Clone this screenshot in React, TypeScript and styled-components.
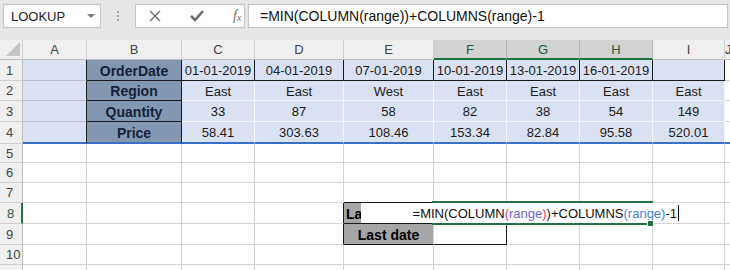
import { FC, ReactNode } from "react";
import styled, { createGlobalStyle } from "styled-components";

const GlobalStyle = createGlobalStyle`
  html, body {
    margin: 0;
    padding: 0;
    background: #ffffff;
    overflow: hidden;
  }
  body {
    font-family: "Liberation Sans", Arial, sans-serif;
  }
`;

const GREEN = "#217346";
const GRID = "#D4D4D4";
const DARK = "#1a1a1a";
const BLUE_FILL = "#D9E1F2";
const LABEL_FILL = "#8497B0";
const SOFT = "#F3F5FA";

const formula = "=MIN(COLUMN(range))+COLUMNS(range)-1";
const columns = ["A", "B", "C", "D", "E", "F", "G", "H", "I", "J"];
const selectedCols = ["F", "G", "H"];

type Row = { label: string; values: string[] };

const table: Row[] = [
  {
    label: "OrderDate",
    values: ["01-01-2019", "04-01-2019", "07-01-2019", "10-01-2019", "13-01-2019", "16-01-2019", ""]
  },
  { label: "Region", values: ["East", "East", "West", "East", "East", "East", "East"] },
  { label: "Quantity", values: ["33", "87", "58", "82", "38", "54", "149"] },
  { label: "Price", values: ["58.41", "303.63", "108.46", "153.34", "82.84", "95.58", "520.01"] }
];

const App: FC = () => (
  <>
    <GlobalStyle />
    <Page>
      <Toolbar>
        <NameBox>
          LOOKUP
          <DropArrow />
        </NameBox>
        <Grip>
          <i />
          <i />
          <i />
        </Grip>
        <ButtonBox>
          <ToolIcon>
            <svg width="12" height="12" viewBox="0 0 12 12">
              <path d="M1 1 L11 11 M11 1 L1 11" stroke="#6d6d6d" strokeWidth="1.4" />
            </svg>
          </ToolIcon>
          <ToolIcon>
            <svg width="14" height="12" viewBox="0 0 14 12">
              <path d="M1 6 L5 10 L13 1" stroke="#6d6d6d" strokeWidth="2.6" fill="none" />
            </svg>
          </ToolIcon>
          <Fx>
            f<sub>x</sub>
          </Fx>
        </ButtonBox>
        <FormulaInput>{formula}</FormulaInput>
      </Toolbar>

      <Sheet>
        <Corner>
          <svg width="14" height="14" viewBox="0 0 14 14">
            <path d="M14 0 L14 14 L0 14 Z" fill="#C4C4C4" />
          </svg>
        </Corner>
        {columns.map(c => (
          <ColHead key={c} $selected={selectedCols.includes(c)}>
            {c}
          </ColHead>
        ))}

        {table.map((row, i) => (
          <DataRow key={row.label} index={i} row={row} />
        ))}

        {[5, 6, 7, 8, 9, 10, 11].map(n => (
          <EmptyRow key={n} n={n} />
        ))}
      </Sheet>
    </Page>
  </>
);

export default App;

const DataRow: FC<{ index: number; row: Row }> = ({ index, row }) => {
  const last = index === 3;
  const first = index === 0;
  return (
    <>
      <RowHead>{index + 1}</RowHead>
      <Cell $bg={BLUE_FILL} $right={DARK} $bottom={last ? undefined : "#B9C3D6"} $blue={last} />
      <Cell $bg={LABEL_FILL} $right={DARK} $bottom={DARK} $blue={last} $bold $color="#16213A">
        {row.label}
      </Cell>
      {row.values.map((v, j) => (
        <Cell
          key={j}
          $bg={BLUE_FILL}
          $right={first ? DARK : SOFT}
          $bottom={first ? DARK : last ? undefined : SOFT}
          $blue={last}
        >
          {v}
        </Cell>
      ))}
      <Cell $blue={last} />
    </>
  );
};

const EmptyRow: FC<{ n: number }> = ({ n }) => {
  const cells: ReactNode[] = [];
  columns.forEach(c => {
    let right: string | undefined;
    let bottom: string | undefined;
    let bg: string | undefined;
    let content: ReactNode = null;
    let bold = false;
    let overlay: ReactNode = null;

    if (c === "D" && (n === 8 || n === 9)) right = DARK;
    if ((c === "E" || c === "F") && n === 7) bottom = DARK;
    if (c === "E" && n === 8) {
      bg = "#A6A6A6";
      bottom = DARK;
      bold = true;
      content = <PeekText>La</PeekText>;
      overlay = (
        <Editor>
          <span>=MIN(COLUMN</span>
          <Ref $c="#D0457E">(</Ref>
          <Ref $c="#6F63D8">range</Ref>
          <Ref $c="#D0457E">)</Ref>
          <span>)+COLUMNS</span>
          <Ref $c="#3F7FD8">(range)</Ref>
          <span>-1</span>
          <Caret />
        </Editor>
      );
    }
    if (c === "F" && n === 8) {
      overlay = (
        <RangeMark>
          <Handle />
        </RangeMark>
      );
    }
    if (c === "E" && n === 9) {
      bg = "#A6A6A6";
      bottom = DARK;
      bold = true;
      content = "Last date";
    }
    if (c === "F" && n === 9) {
      right = DARK;
      bottom = DARK;
    }

    cells.push(
      <Cell key={c} $bg={bg} $right={right} $bottom={bottom} $bold={bold} $color="#000">
        {content}
        {overlay}
      </Cell>
    );
  });

  return (
    <>
      <RowHead $active={n === 8}>{n < 11 ? n : null}</RowHead>
      {cells}
    </>
  );
};

const Page = styled.div`
  width: 730px;
  height: 270px;
  background: #e6e6e6;
  overflow: hidden;
`;

const Toolbar = styled.div`
  height: 40px;
  box-sizing: border-box;
  padding: 4px 0 0 3px;
  display: flex;
  align-items: flex-start;
  background: #e6e6e6;
`;

const Box = styled.div`
  height: 24px;
  box-sizing: border-box;
  background: #ffffff;
  border: 1px solid #c6c6c6;
  display: flex;
  align-items: center;
`;

const NameBox = styled(Box)`
  width: 98px;
  padding-left: 7px;
  font-size: 13px;
  color: #222;
  position: relative;
`;

const DropArrow = styled.span`
  position: absolute;
  right: 5px;
  top: 9px;
  border-left: 4px solid transparent;
  border-right: 4px solid transparent;
  border-top: 4px solid #7a7a7a;
`;

const Grip = styled.div`
  width: 34px;
  height: 24px;
  display: flex;
  flex-direction: column;
  align-items: center;
  justify-content: center;
  gap: 2px;

  i {
    width: 2px;
    height: 2px;
    background: #a9a9a9;
  }
`;

const ButtonBox = styled(Box)`
  width: 110px;
  padding-left: 12px;
`;

const ToolIcon = styled.span`
  width: 40px;
  height: 14px;
  display: flex;
  align-items: center;
  justify-content: flex-start;
  padding-left: 1px;
`;

const Fx = styled.span`
  font-family: "Liberation Serif", "Times New Roman", serif;
  font-style: italic;
  font-size: 14px;
  color: #6d6d6d;
  margin-left: 3px;

  sub {
    font-size: 10px;
    vertical-align: -1px;
  }
`;

const FormulaInput = styled(Box)`
  margin-left: 3px;
  width: 480px;
  padding-left: 11px;
  font-size: 14px;
  color: #111;
`;

const Sheet = styled.div`
  display: grid;
  grid-template-columns: 23px 64px 95px 73px 89px 90px 73px 73px 73px 72px 1fr;
  grid-template-rows: 20px 21px 20px 21px 22px 19px 20px 20px 21px 21px 20px 20px;
  background: #ffffff;
`;

const HeadBase = styled.div`
  box-sizing: border-box;
  background: #efefef;
  border-right: 1px solid #cfcfcf;
  border-bottom: 1px solid #bdbdbd;
  font-size: 13px;
  color: #444;
  display: flex;
  align-items: center;
  justify-content: center;
`;

const Corner = styled(HeadBase)`
  align-items: flex-end;
  justify-content: flex-end;
  padding: 0 2px 3px 0;
`;

const ColHead = styled(HeadBase)<{ $selected?: boolean }>`
  background: ${p => (p.$selected ? "#d2d2d2" : "#efefef")};
  color: ${p => (p.$selected ? "#1f5c3a" : "#444")};
  border-bottom: ${p => (p.$selected ? `2px solid ${GREEN}` : "1px solid #bdbdbd")};
  border-right-color: ${p => (p.$selected ? "#b5b5b5" : "#cfcfcf")};
`;

const RowHead = styled(HeadBase)<{ $active?: boolean }>`
  border-bottom-color: #cfcfcf;
  border-right: ${p => (p.$active ? `2px solid ${GREEN}` : "1px solid #bdbdbd")};
  color: ${p => (p.$active ? "#1f5c3a" : "#444")};
  justify-content: flex-start;
  padding-left: ${p => (p.$active ? 7 : 6)}px;
`;

const Cell = styled.div<{
  $bg?: string;
  $right?: string;
  $bottom?: string;
  $blue?: boolean;
  $bold?: boolean;
  $color?: string;
}>`
  position: relative;
  box-sizing: border-box;
  min-width: 0;
  background: ${p => p.$bg ?? "#ffffff"};
  border-right: 1px solid ${p => p.$right ?? GRID};
  border-bottom: ${p => (p.$blue ? "2px solid #3b6fc4" : `1px solid ${p.$bottom ?? GRID}`)};
  font-size: ${p => (p.$bold ? 14 : 13)}px;
  font-weight: ${p => (p.$bold ? 700 : 400)};
  color: ${p => p.$color ?? "#1b1b1b"};
  display: flex;
  align-items: center;
  justify-content: center;
  white-space: nowrap;
  padding-top: 1px;
`;

const PeekText = styled.span`
  position: absolute;
  left: 2px;
`;

const Editor = styled.div`
  position: absolute;
  left: 17px;
  top: 0;
  width: 321px;
  height: 20px;
  background: #ffffff;
  z-index: 2;
  display: flex;
  align-items: center;
  justify-content: flex-end;
  padding-right: 3px;
  box-sizing: border-box;
  font-size: 13px;
  font-weight: 400;
  color: #111;
`;

const Ref = styled.span<{ $c: string }>`
  color: ${p => p.$c};
`;

const Caret = styled.span`
  width: 1px;
  height: 16px;
  margin-left: 1px;
  background: #000;
`;

const RangeMark = styled.div`
  position: absolute;
  left: -2px;
  top: -2px;
  width: 221px;
  height: 20px;
  border-top: 2px solid ${GREEN};
  border-bottom: 2px solid ${GREEN};
  z-index: 3;
  pointer-events: none;
`;

const Handle = styled.span`
  position: absolute;
  right: -1px;
  bottom: -4px;
  width: 5px;
  height: 5px;
  background: ${GREEN};
  border: 1px solid #ffffff;
`;
